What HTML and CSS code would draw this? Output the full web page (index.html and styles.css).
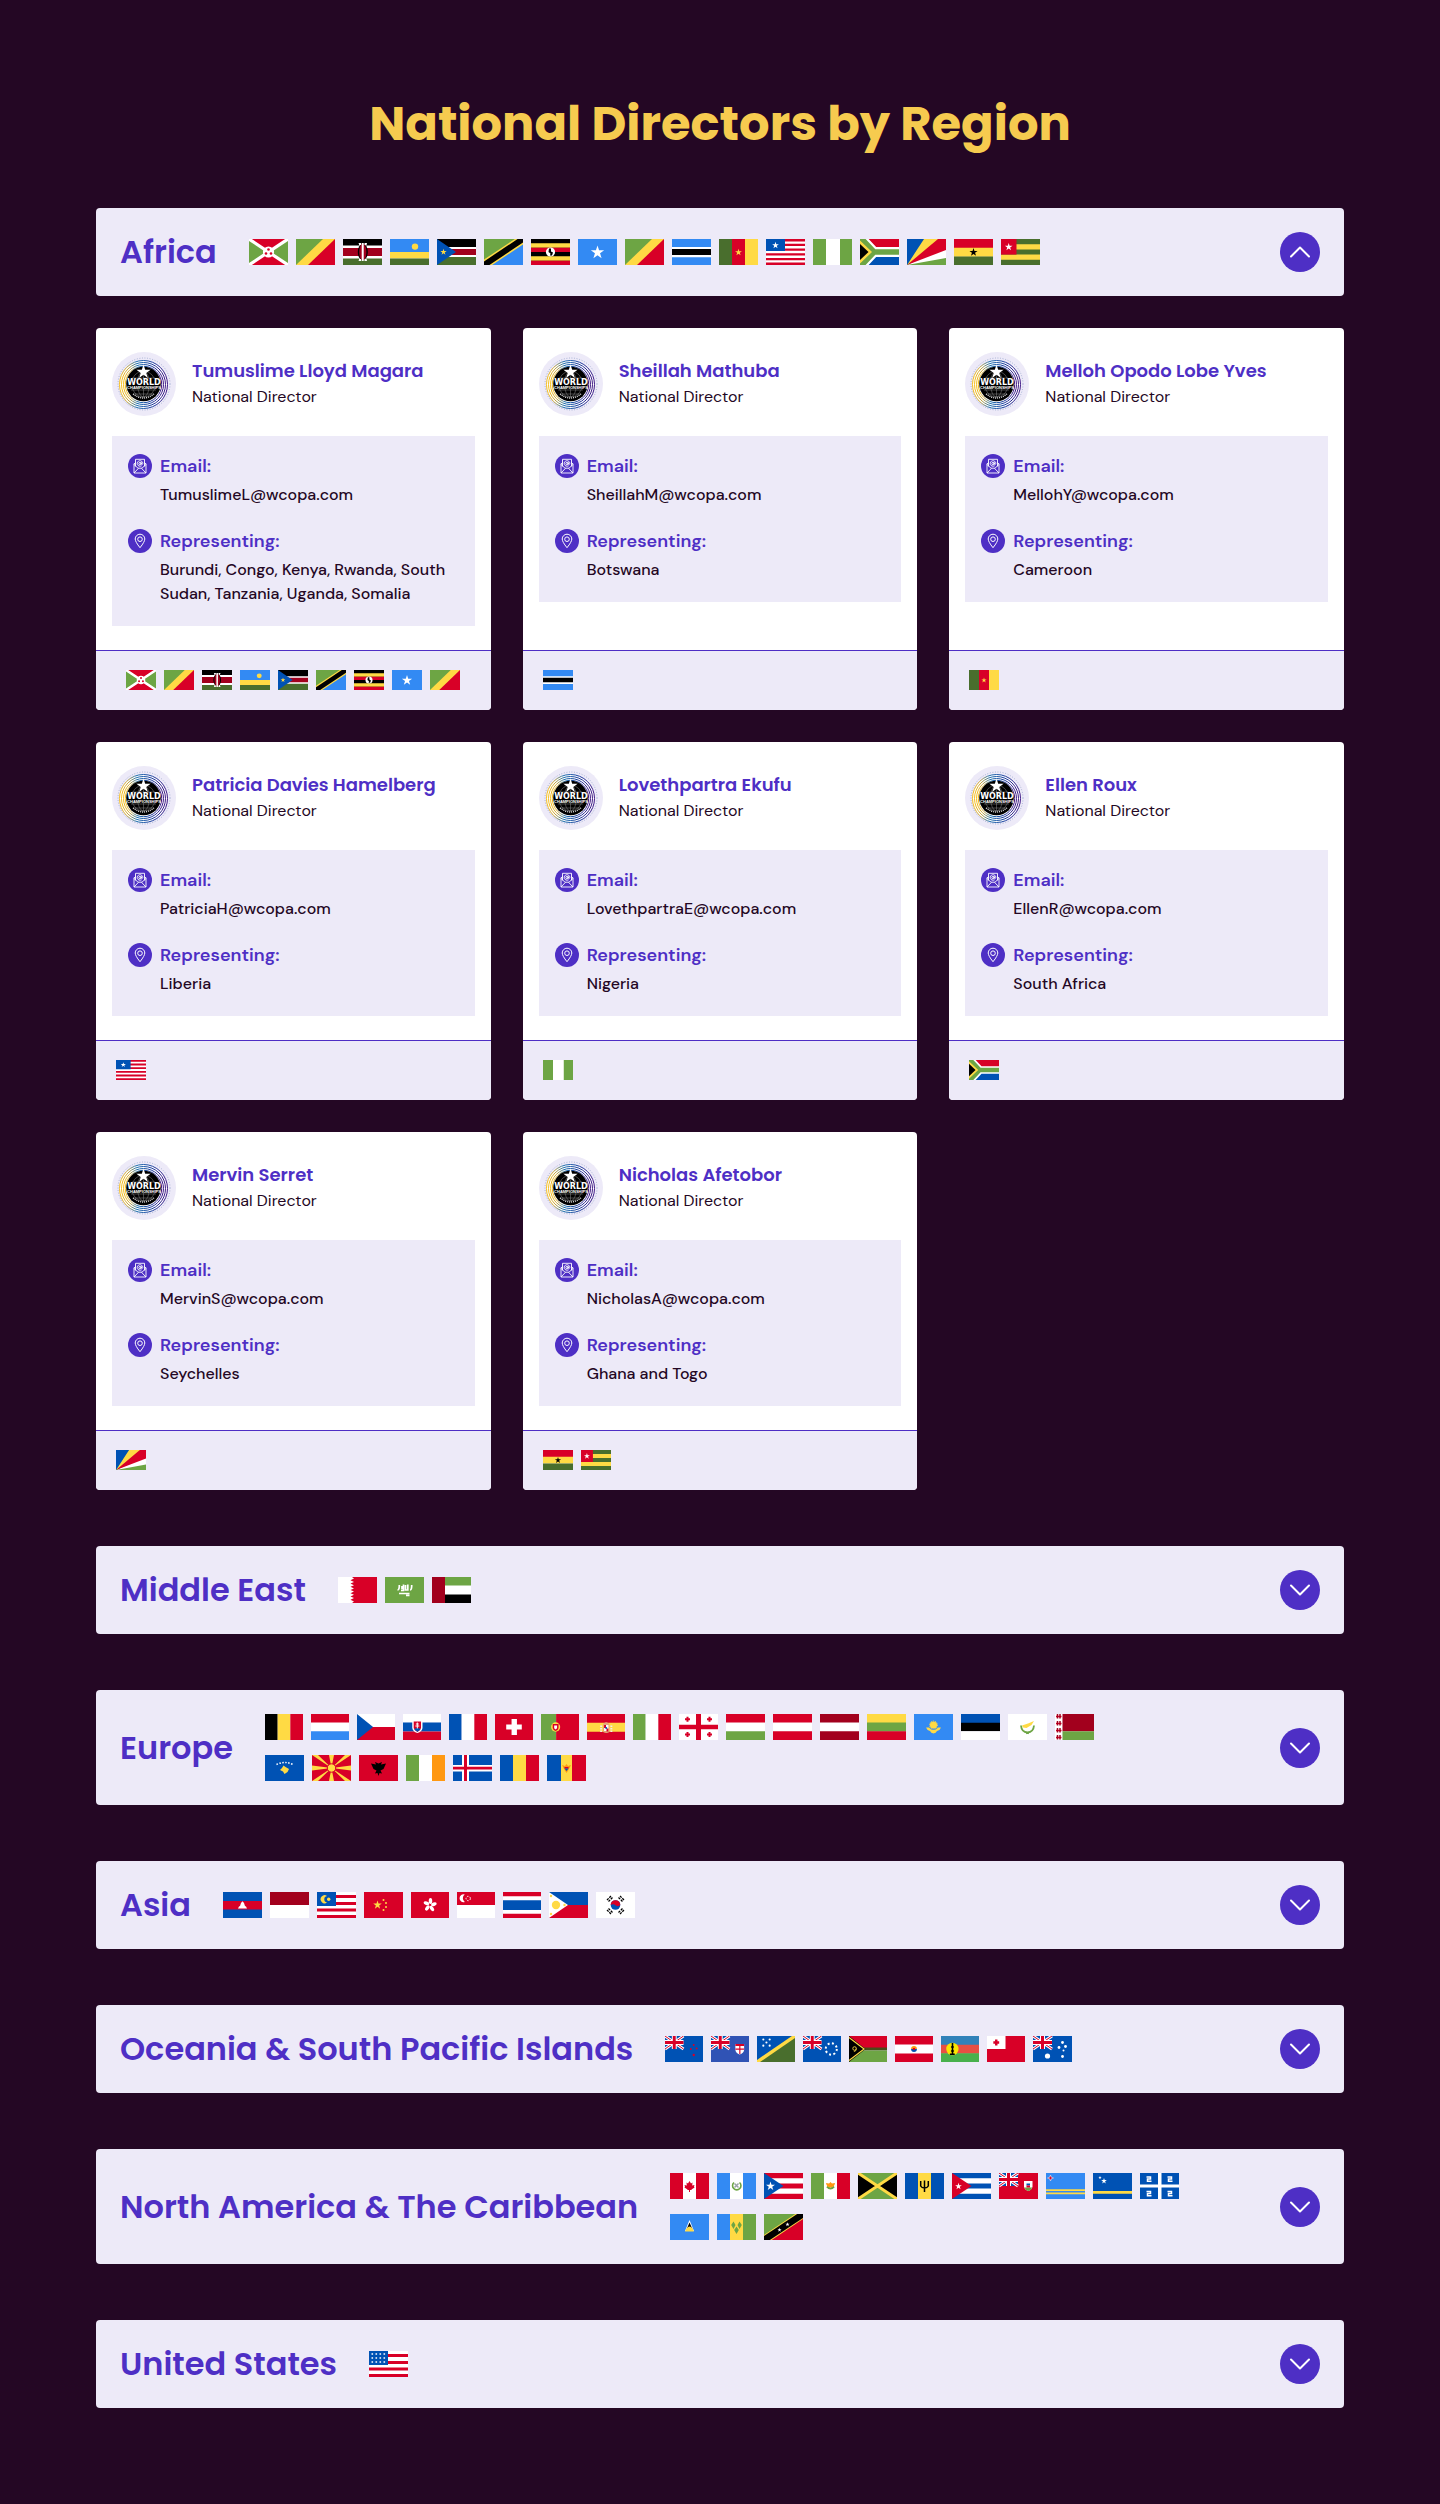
FILE: index.html
```
<!DOCTYPE html>
<html lang="en">
<head>
<meta charset="utf-8">
<meta name="viewport" content="width=device-width, initial-scale=1">
<title>National Directors by Region</title>
<link rel="stylesheet" href="styles.css">
</head>
<body>
<svg class="sprite" aria-hidden="true">
  <defs>
    <linearGradient id="ring" x1="0" y1="0" x2="1" y2="0">
      <stop offset="0" stop-color="#f5bd1c"/><stop offset=".15" stop-color="#c9a53a"/><stop offset=".35" stop-color="#1d6fae"/><stop offset=".7" stop-color="#1a3a9c"/><stop offset="1" stop-color="#3c1583"/>
    </linearGradient>
    <polygon id="star" points="0,-1 .225,-.309 .951,-.309 .363,.118 .588,.809 0,.382 -.588,.809 -.363,.118 -.951,-.309 -.225,-.309"/>
    <g id="jack">
      <path class="b" d="M0 0h19v13H0z"/>
      <path d="M0 0l19 13M19 0L0 13" stroke="#fff" stroke-width="3"/>
      <path d="M0 0l19 13M19 0L0 13" stroke="#d80027" stroke-width="1"/>
      <path class="w" d="M7 0h5v13H7zM0 4h19v5H0z"/>
      <path class="r" d="M8 0h3v13H8zM0 5h19v3H0z"/>
    </g>
  </defs>

  <symbol id="logo" viewBox="0 0 64 64">
    <circle cx="32" cy="32" r="26" fill="none" stroke="#7d8fc0" stroke-width="1" stroke-dasharray="1 1.600" opacity=".6"/>
    <circle cx="31.500" cy="32.500" r="24" fill="#fff"/>
    <g fill="none" stroke="url(#ring)" stroke-width="1">
      <circle cx="31.500" cy="32.500" r="24"/><circle cx="31.500" cy="32.500" r="22"/><circle cx="31.500" cy="32.500" r="20"/><circle cx="31.500" cy="32.500" r="18.200"/>
    </g>
    <circle cx="31.500" cy="32" r="17.300" fill="#000"/>
    <g fill="none" stroke="#8b8b8b" stroke-width=".5">
      <ellipse cx="31.500" cy="32" rx="6" ry="13"/><ellipse cx="31.500" cy="32" rx="12" ry="13"/><path d="M20 26h23M19 38h25M21 42h21M31.500 20v25"/>
    </g>
    <path d="M21 42q10.500 8 21 0" fill="none" stroke="#ddd" stroke-width="1.400" stroke-dasharray="1 1"/>
    <path d="M15.500 27h32v10h-32z" fill="#000"/>
    <use href="#star" transform="translate(31.500 20) scale(7.500)" fill="#fff"/>
  </symbol>
  <symbol id="mail" viewBox="0 0 24 24">
    <circle cx="12" cy="12" r="12" fill="#4e2fc5"/>
    <g fill="none" stroke="#fff" stroke-width=".9" stroke-linejoin="round" stroke-linecap="round">
      <path d="M7.500 12V5.300h9V12M7.500 8.500L6 10v9h12v-9l-1.500-1.500M6 10.500l4 3.700h4l4-3.700M6.300 18.700l3.800-4M17.700 18.700l-3.800-4"/>
      <circle cx="12" cy="9.600" r="1.200"/><path d="M13.200 8.500v1.600q1.600.8 1.600-.7A2.800 2.800 0 1 0 13.300 12"/>
    </g>
  </symbol>
  <symbol id="pin" viewBox="0 0 24 24">
    <circle cx="12" cy="12" r="12" fill="#4e2fc5"/>
    <g fill="none" stroke="#fff" stroke-width="1"><path d="M12 18.700Q7.200 12.700 7.200 10a4.800 4.800 0 0 1 9.600 0Q16.800 12.700 12 18.700z"/><circle cx="12" cy="10.200" r="2.300"/></g>
  </symbol>

  <symbol id="bi" viewBox="0 0 39 26" preserveAspectRatio="none"><path class="r" d="M0 0h39v26H0z"/><path class="g" d="M0 0l19.500 13L0 26zM39 0L19.500 13 39 26z"/><path d="M0 0l39 26M39 0L0 26" stroke="#fff" stroke-width="3.200"/><circle class="w" cx="19.500" cy="13" r="5.600"/><g class="r"><circle cx="19.500" cy="10.500" r="1.300"/><circle cx="17" cy="14.500" r="1.300"/><circle cx="22" cy="14.500" r="1.300"/></g></symbol>
  <symbol id="cg" viewBox="0 0 39 26" preserveAspectRatio="none"><path class="y" d="M0 0h39v26H0z"/><path class="g" d="M0 0h27L0 26z"/><path class="r" d="M39 0v26H12z"/></symbol>
  <symbol id="ke" viewBox="0 0 39 26" preserveAspectRatio="none"><path class="w" d="M0 0h39v26H0z"/><path class="k" d="M0 0h39v6.500H0z"/><path class="m" d="M0 9h39v8H0z"/><path class="d" d="M0 19.500h39V26H0z"/><path d="M16 4l7.500 18M23.500 4L16 22" stroke="#fff" stroke-width="1"/><ellipse class="k" cx="19.800" cy="13" rx="5" ry="8"/><ellipse class="m" cx="19.800" cy="13" rx="3.600" ry="8.500"/><path class="w" d="M18.700 4h2v18h-2zM16 4h2v2h-2zM21.500 4h2v2h-2zM16 20h2v2h-2zM21.500 20h2v2h-2z"/></symbol>
  <symbol id="rw" viewBox="0 0 39 26" preserveAspectRatio="none"><path class="s" d="M0 0h39v13H0z"/><path class="y" d="M0 13h39v6.500H0z"/><path class="d" d="M0 19.500h39V26H0z"/><circle class="y" cx="25" cy="7.600" r="3.200"/></symbol>
  <symbol id="ss" viewBox="0 0 39 26" preserveAspectRatio="none"><path class="w" d="M0 0h39v26H0z"/><path class="k" d="M0 0h39v8H0z"/><path class="m" d="M0 10h39v6H0z"/><path class="d" d="M0 18h39v8H0z"/><path class="b" d="M0 0l19 13L0 26z"/><use href="#star" class="y" transform="translate(6.500 13) scale(3.300)"/></symbol>
  <symbol id="tz" viewBox="0 0 39 26" preserveAspectRatio="none"><path class="g" d="M0 0h39v26H0z"/><path class="s" d="M39 0v26H0z"/><path d="M-3 28L42-2" stroke="#ffda44" stroke-width="9"/><path d="M-3 28L42-2" stroke="#000" stroke-width="6"/></symbol>
  <symbol id="ug" viewBox="0 0 39 26" preserveAspectRatio="none"><path class="k" d="M0 0h39v26H0z"/><path class="y" d="M0 4.300h39v4.400H0zM0 17.300h39v4.400H0z"/><path class="r" d="M0 8.700h39V13H0zM0 21.700h39V26H0z"/><circle class="w" cx="19.500" cy="13" r="4.600"/><path class="k" d="M18 9.500h2v3l2 1-1 3h-2l.500-2-2-1.500z"/></symbol>
  <symbol id="so" viewBox="0 0 39 26" preserveAspectRatio="none"><path class="s" d="M0 0h39v26H0z"/><use href="#star" class="w" transform="translate(19.500 13.500) scale(7)"/></symbol>
  <symbol id="bw" viewBox="0 0 39 26" preserveAspectRatio="none"><path class="s" d="M0 0h39v26H0z"/><path class="w" d="M0 8h39v10.200H0z"/><path class="k" d="M0 10h39v6H0z"/></symbol>
  <symbol id="cm" viewBox="0 0 39 26" preserveAspectRatio="none"><path class="d" d="M0 0h13v26H0z"/><path class="r" d="M13 0h13v26H13z"/><path class="y" d="M26 0h13v26H26z"/><use href="#star" class="y" transform="translate(19.500 13.300) scale(3.600)"/></symbol>
  <symbol id="lr" viewBox="0 0 39 26" preserveAspectRatio="none"><path class="w" d="M0 0h39v26H0z"/><path d="M0 1.200h39M0 5.900h39M0 10.600h39M0 15.400h39M0 20.100h39M0 24.800h39" stroke="#d80027" stroke-width="2.400"/><path class="b" d="M0 0h19v12H0z"/><use href="#star" class="w" transform="translate(9.500 6.300) scale(3.500)"/></symbol>
  <symbol id="ng" viewBox="0 0 39 26" preserveAspectRatio="none"><path class="w" d="M0 0h39v26H0z"/><path class="g" d="M0 0h13v26H0zM27 0h12v26H27z"/></symbol>
  <symbol id="za" viewBox="0 0 39 26" preserveAspectRatio="none"><path class="r" d="M0 0h39v13H0z"/><path class="b" d="M0 13h39v13H0z"/><path d="M-2-4l16 17-16 17M14 13h27" fill="none" stroke="#fff" stroke-width="10"/><path d="M-2-4l16 17-16 17M14 13h27" fill="none" stroke="#6da544" stroke-width="5.600"/><path class="y" d="M0 1.500L12 13 0 24.500z"/><path class="k" d="M0 5l8.500 8L0 21z"/></symbol>
  <symbol id="sc" viewBox="0 0 39 26" preserveAspectRatio="none"><path class="g" d="M0 0h39v26H0z"/><path class="w" d="M0 26L39 8v11z"/><path class="r" d="M0 26L29 0h10v11z"/><path class="y" d="M0 26L16 0h15z"/><path class="b" d="M0 0h17L0 26z"/></symbol>
  <symbol id="gh" viewBox="0 0 39 26" preserveAspectRatio="none"><path class="r" d="M0 0h39v9H0z"/><path class="y" d="M0 8.700h39v9H0z"/><path class="d" d="M0 17.500h39V26H0z"/><use href="#star" class="k" transform="translate(19.500 13.300) scale(4.300)"/></symbol>
  <symbol id="tg" viewBox="0 0 39 26" preserveAspectRatio="none"><path class="d" d="M0 0h39v26H0z"/><path class="y" d="M0 5.200h39v5.200H0zM0 15.600h39v5.200H0z"/><path class="r" d="M0 0h15.500v15.600H0z"/><use href="#star" class="w" transform="translate(7.700 8) scale(4)"/></symbol>

  <symbol id="bh" viewBox="0 0 39 26" preserveAspectRatio="none"><path class="w" d="M0 0h39v26H0z"/><path class="r" d="M39 0H14l2 1.600-3.500 1.600L16 5l-3.500 1.600L16 8.200l-3.500 1.600 3.500 1.600L12.500 13l3.500 1.600-3.500 1.600 3.500 1.600-3.500 1.600L16 21l-3.500 1.800 3.500 1.600L14 26h25z"/></symbol>
  <symbol id="sa" viewBox="0 0 39 26" preserveAspectRatio="none"><path class="g" d="M0 0h39v26H0z"/><path d="M12.500 13q2 0 1.800-5M16 13.300h2.500V7.500M17 9v3M20.500 8v5h2.300V7.500M25 13q1.800 0 1.700-5M14 16.500h10.500M21 18.300h3.500" fill="none" stroke="#fff" stroke-width="1.700"/></symbol>
  <symbol id="ae" viewBox="0 0 39 26" preserveAspectRatio="none"><path class="w" d="M0 0h39v26H0z"/><path class="g" d="M0 0h39v8.500H0z"/><path class="k" d="M0 17.500h39V26H0z"/><path class="m" d="M0 0h13v26H0z"/></symbol>

  <symbol id="be" viewBox="0 0 39 26" preserveAspectRatio="none"><path class="k" d="M0 0h13v26H0z"/><path class="y" d="M13 0h13v26H13z"/><path class="r" d="M26 0h13v26H26z"/></symbol>
  <symbol id="lu" viewBox="0 0 39 26" preserveAspectRatio="none"><path class="w" d="M0 0h39v26H0z"/><path class="r" d="M0 0h39v8.500H0z"/><path class="s" d="M0 17.300h39V26H0z"/></symbol>
  <symbol id="cz" viewBox="0 0 39 26" preserveAspectRatio="none"><path class="w" d="M0 0h39v13H0z"/><path class="r" d="M0 13h39v13H0z"/><path class="b" d="M0 0l16.500 13L0 26z"/></symbol>
  <symbol id="sk" viewBox="0 0 39 26" preserveAspectRatio="none"><path class="w" d="M0 0h39v8.500H0z"/><path class="b" d="M0 8.500h39v9H0z"/><path class="r" d="M0 17.500h39V26H0z"/><path class="w" d="M9.500 6.500H20V14q-.500 3.500-5.200 5Q10 17.500 9.500 14z"/><path class="r" d="M11 7.500h7.500V14q-.500 2.500-3.700 4-3.200-1.500-3.800-4z"/><path class="b" d="M11.500 15q3.300-2 6.500 0-1 1.800-3.200 2.800-2.300-1-3.300-2.800z"/><path d="M14.700 8.500v6M12.700 12h4M13.200 10h3" stroke="#fff"/></symbol>
  <symbol id="fr" viewBox="0 0 39 26" preserveAspectRatio="none"><path class="b" d="M0 0h13v26H0z"/><path class="w" d="M13 0h13v26H13z"/><path class="r" d="M26 0h13v26H26z"/></symbol>
  <symbol id="ch" viewBox="0 0 39 26" preserveAspectRatio="none"><path class="r" d="M0 0h39v26H0z"/><path class="w" d="M17 5h5.500v5.500h5v5h-5V21H17v-5.500h-5.500v-5H17z"/></symbol>
  <symbol id="pt" viewBox="0 0 39 26" preserveAspectRatio="none"><path class="g" d="M0 0h15.500v26H0z"/><path class="r" d="M15.500 0H39v26H15.500z"/><circle class="y" cx="15" cy="13" r="4.700"/><path class="r" d="M12 10h6v4q-.500 2.500-3 3-2.500-.500-3-3z"/><path class="w" d="M13.500 11.500h3v2.700L15 15.500l-1.500-1.300z"/></symbol>
  <symbol id="es" viewBox="0 0 39 26" preserveAspectRatio="none"><path class="r" d="M0 0h39v26H0z"/><path class="y" d="M0 8.700h39v9H0z"/><path d="M14.500 11.500v7M25 11.500v7" stroke="#eee" stroke-width="2" stroke-dasharray="1.500 1"/><path fill="#e3a878" d="M16.500 10q3-3.500 6.500 0v8q-3 2-6.500 0z"/><path class="w" d="M17.500 11h4.500v6h-4.500z"/><path class="r" d="M17.500 11h2v3h-2zM20 14.500h2v3h-2z"/><circle class="b" cx="19.700" cy="14" r="1"/></symbol>
  <symbol id="it" viewBox="0 0 39 26" preserveAspectRatio="none"><path class="g" d="M0 0h13v26H0z"/><path class="w" d="M13 0h13v26H13z"/><path class="r" d="M26 0h13v26H26z"/></symbol>
  <symbol id="ge" viewBox="0 0 39 26" preserveAspectRatio="none"><path class="w" d="M0 0h39v26H0z"/><path class="r" d="M17 0h5v26h-5zM0 10.700h39v4.600H0z"/><path d="M6 5.300h5M8.500 2.800v5M28 5.300h5M30.500 2.800v5M6 20.500h5M8.500 18v5M28 20.500h5M30.500 18v5" stroke="#d80027" stroke-width="2"/></symbol>
  <symbol id="hu" viewBox="0 0 39 26" preserveAspectRatio="none"><path class="w" d="M0 0h39v26H0z"/><path class="r" d="M0 0h39v8.500H0z"/><path class="g" d="M0 17.300h39V26H0z"/></symbol>
  <symbol id="at" viewBox="0 0 39 26" preserveAspectRatio="none"><path class="w" d="M0 0h39v26H0z"/><path class="r" d="M0 0h39v8.500H0zM0 17.300h39V26H0z"/></symbol>
  <symbol id="lv" viewBox="0 0 39 26" preserveAspectRatio="none"><path class="w" d="M0 0h39v26H0z"/><path class="m" d="M0 0h39v8.500H0zM0 17.300h39V26H0z"/></symbol>
  <symbol id="lt" viewBox="0 0 39 26" preserveAspectRatio="none"><path class="y" d="M0 0h39v9H0z"/><path class="g" d="M0 8.600h39v9H0z"/><path class="r" d="M0 17.300h39V26H0z"/></symbol>
  <symbol id="kz" viewBox="0 0 39 26" preserveAspectRatio="none"><path class="s" d="M0 0h39v26H0z"/><circle class="y" cx="19.500" cy="11" r="3.600"/><circle cx="19.500" cy="11" r="4" fill="none" stroke="#ffda44" stroke-dasharray="1 1"/><path class="y" d="M12 13.500h3q4.500 5 9 0h3q-1 3-4 3.500-1 2-3.500 2.500-2.500-.500-3.500-2.500-3-.500-4-3.500z"/></symbol>
  <symbol id="ee" viewBox="0 0 39 26" preserveAspectRatio="none"><path class="b" d="M0 0h39v9H0z"/><path class="k" d="M0 8.700h39v8.600H0z"/><path class="w" d="M0 17.300h39V26H0z"/></symbol>
  <symbol id="cy" viewBox="0 0 39 26" preserveAspectRatio="none"><path class="w" d="M0 0h39v26H0z"/><path class="y" d="M14 11.500l6-2 6-2.500-2.500 4-5 3-3.500-.500z"/><path d="M13 11.500q.500 6.500 6.500 7 6-.500 6.500-7M18 19.500l1.500-1 1.500 1" fill="none" stroke="#6da544" stroke-width="1.800"/></symbol>
  <symbol id="by" viewBox="0 0 39 26" preserveAspectRatio="none"><path class="w" d="M0 0h7.500v26H0z"/><path class="m" d="M7.500 0H39v17.300H7.500z"/><path class="g" d="M7.500 17.300H39V26H7.500z"/><path d="M1 2.500h5.500M1 9.500h5.500M1 16.500h5.500M1 23.500h5.500" stroke="#d80027" stroke-width="1.500"/><path d="M2.500 0v26M5 0v26" stroke="#a2001d" stroke-width="1.500" stroke-dasharray="4.500 2.500"/></symbol>
  <symbol id="xk" viewBox="0 0 39 26" preserveAspectRatio="none"><path class="b" d="M0 0h39v26H0z"/><path d="M11.500 9.500q8-4 16.500 0" fill="none" stroke="#fff" stroke-width="1.500" stroke-dasharray="1.500 1.500"/><path class="y" d="M18.500 10.500l2 1.500 3.500 2-1.500 3-3 2-1.500-2.500-3-1.500 2-2z"/></symbol>
  <symbol id="mk" viewBox="0 0 39 26" preserveAspectRatio="none"><path class="r" d="M0 0h39v26H0z"/><path class="y" d="M0 0h6l13.500 13L33 0h6L19.500 13 39 26h-6L19.500 13 6 26H0l19.500-13zM17 0h5l-2.500 13zM17 26h5l-2.500-13zM0 10.500v5L19.500 13zM39 10.500v5L19.500 13z"/><circle cx="19.500" cy="13" r="4.200" class="y" stroke="#d80027"/></symbol>
  <symbol id="al" viewBox="0 0 39 26" preserveAspectRatio="none"><path class="r" d="M0 0h39v26H0z"/><path class="k" d="M16 7l3.500 1.500L23 7l-1 2.500 5-1-2.500 5.500-3 1.500 1.500 3-2.500-.500-1 3-1-3-2.500.500 1.500-3-3-1.500L12 8.500l5 1z"/></symbol>
  <symbol id="ie" viewBox="0 0 39 26" preserveAspectRatio="none"><path class="g" d="M0 0h13v26H0z"/><path class="w" d="M13 0h13v26H13z"/><path class="o" d="M26 0h13v26H26z"/></symbol>
  <symbol id="is" viewBox="0 0 39 26" preserveAspectRatio="none"><path class="b" d="M0 0h39v26H0z"/><path class="w" d="M9 0h7v26H9zM0 10h39v6.500H0z"/><path class="r" d="M11 0h3v26h-3zM0 11.800h39v2.800H0z"/></symbol>
  <symbol id="ro" viewBox="0 0 39 26" preserveAspectRatio="none"><path class="b" d="M0 0h13v26H0z"/><path class="y" d="M13 0h13v26H13z"/><path class="r" d="M26 0h13v26H26z"/></symbol>
  <symbol id="md" viewBox="0 0 39 26" preserveAspectRatio="none"><path class="b" d="M0 0h14v26H0z"/><path class="y" d="M14 0h11v26H14z"/><path class="r" d="M25 0h14v26H25z"/><path class="o" d="M15 10l3 1 1.500-2 1.500 2 3-1-2 4-2.500 4-2.500-4z"/><path class="r" d="M17.500 12h4v1.500h-4z"/><path class="b" d="M17.500 13.500h4L19.500 16z"/></symbol>

  <symbol id="kh" viewBox="0 0 39 26" preserveAspectRatio="none"><path class="b" d="M0 0h39v26H0z"/><path class="r" d="M0 9h39v8.500H0z"/><path class="w" d="M15 16.500l1-2 1-.500 1-3 1.500-1.700 1.500 1.700 1 3 1 .500 1 2z"/></symbol>
  <symbol id="id" viewBox="0 0 39 26" preserveAspectRatio="none"><path class="m" d="M0 0h39v13H0z"/><path class="w" d="M0 13h39v13H0z"/></symbol>
  <symbol id="my" viewBox="0 0 39 26" preserveAspectRatio="none"><path class="w" d="M0 0h39v26H0z"/><path d="M0 4.500h39M0 11.500h39M0 18h39M0 24.500h39" stroke="#d80027" stroke-width="3"/><path class="b" d="M0 0h19v14H0z"/><path class="y" d="M10 4a4 4 0 1 0 0 6.500 3.300 3.300 0 0 1 0-6.500z"/><circle class="y" cx="11.700" cy="7.200" r="1.700"/></symbol>
  <symbol id="cn" viewBox="0 0 39 26" preserveAspectRatio="none"><path class="r" d="M0 0h39v26H0z"/><use href="#star" class="y" transform="translate(13.500 13) scale(4.500)"/><g class="y"><circle cx="19.500" cy="8" r="1"/><circle cx="22" cy="11" r="1"/><circle cx="22" cy="15" r="1"/><circle cx="19.500" cy="18" r="1"/></g></symbol>
  <symbol id="hk" viewBox="0 0 39 26" preserveAspectRatio="none"><path class="r" d="M0 0h39v26H0z"/><g class="w" transform="translate(19.500 13)"><ellipse id="petal" cx=".5" cy="-4" rx="1.800" ry="3"/><use href="#petal" transform="rotate(72)"/><use href="#petal" transform="rotate(144)"/><use href="#petal" transform="rotate(216)"/><use href="#petal" transform="rotate(288)"/></g></symbol>
  <symbol id="sg" viewBox="0 0 39 26" preserveAspectRatio="none"><path class="r" d="M0 0h39v13H0z"/><path class="w" d="M0 13h39v13H0zM8 2.500a4 4 0 1 0 0 7.500 4.500 4.500 0 0 1 0-7.500z"/><circle cx="11.500" cy="6.500" r="2.200" fill="none" stroke="#fff" stroke-dasharray="1.500 1.200"/></symbol>
  <symbol id="th" viewBox="0 0 39 26" preserveAspectRatio="none"><path class="w" d="M0 0h39v26H0z"/><path class="r" d="M0 0h39v4.300H0zM0 21.700h39V26H0z"/><path class="b" d="M0 8.300h39V18H0z"/></symbol>
  <symbol id="ph" viewBox="0 0 39 26" preserveAspectRatio="none"><path class="b" d="M0 0h39v13H0z"/><path class="r" d="M0 13h39v13H0z"/><path class="w" d="M0 0l19 13L0 26z"/><g class="y"><circle cx="7" cy="13" r="4.200"/><circle cx="2" cy="4" r="1.200"/><circle cx="2" cy="22" r="1.200"/><circle cx="15.500" cy="13" r="1.200"/></g></symbol>
  <symbol id="kr" viewBox="0 0 39 26" preserveAspectRatio="none"><path class="w" d="M0 0h39v26H0z"/><circle class="b" cx="19.500" cy="13" r="4.800"/><path class="r" d="M14.700 13a4.800 4.800 0 0 1 9.600 0q-2 2-4.500.500-2.500-2-5.100-.500z"/><path d="M11 8l4-4M12.500 9.500l4-4M24 4l4 4M22.500 5.500l4 4M11 18l4 4M12.500 16.500l4 4M24 22l4-4M22.500 20.500l4-4" stroke="#000" stroke-width="1.300" stroke-dasharray="2.300 1"/></symbol>

  <symbol id="nz" viewBox="0 0 39 26" preserveAspectRatio="none"><path class="b" d="M0 0h39v26H0z"/><use href="#jack"/><g class="r"><circle cx="29.500" cy="9" r="1"/><circle cx="26.500" cy="13" r="1"/><circle cx="32.500" cy="12.500" r="1"/><circle cx="29.500" cy="19" r="1.200"/></g></symbol>
  <symbol id="fj" viewBox="0 0 39 26" preserveAspectRatio="none"><path fill="#3053b5" d="M0 0h39v26H0z"/><use href="#jack"/><path class="w" d="M25 8h9v6q-.500 3-4.500 4.500Q25.500 17 25 14z"/><path class="r" d="M25 8h9v2h-9zM29 9h1.200v9H29zM25 12.500h9v1.200h-9z"/></symbol>
  <symbol id="sb" viewBox="0 0 39 26" preserveAspectRatio="none"><path class="b" d="M0 0h39v26H0z"/><path class="d" d="M39 0v26H0z"/><path d="M-3 28L42-2" stroke="#ffda44" stroke-width="3.500"/><g class="w"><circle cx="6.500" cy="3.500" r="1.100"/><circle cx="13" cy="3.500" r="1.100"/><circle cx="9.700" cy="6.500" r="1.100"/><circle cx="6.500" cy="9.700" r="1.100"/><circle cx="13" cy="9.700" r="1.100"/></g></symbol>
  <symbol id="ck" viewBox="0 0 39 26" preserveAspectRatio="none"><path class="b" d="M0 0h39v26H0z"/><use href="#jack"/><circle cx="29" cy="13" r="5.700" fill="none" stroke="#fff" stroke-width="2" stroke-dasharray="2 2.480"/></symbol>
  <symbol id="vu" viewBox="0 0 39 26" preserveAspectRatio="none"><path class="r" d="M0 0h39v12H0z"/><path fill="#4a4a18" d="M0 11.500h39v3H0z"/><path class="g" d="M0 14.500h39V26H0z"/><path class="k" d="M0 0l17 13L0 26z"/><path d="M0 1.500L15.500 13 0 24.500" fill="none" stroke="#ffda44" stroke-width="1.200"/><circle cx="5.700" cy="12.500" r="1.800" fill="none" stroke="#e5c440"/><path d="M7.500 12.500q0 3-2.500 3" fill="none" stroke="#e5c440"/></symbol>
  <symbol id="pf" viewBox="0 0 39 26" preserveAspectRatio="none"><path class="w" d="M0 0h39v26H0z"/><path class="r" d="M0 0h39v8.500H0zM0 17.500h39V26H0z"/><path class="o" d="M16.500 13a3 3 0 0 1 6 0z"/><path class="b" d="M16.500 13a3 3 0 0 0 6 0z"/><path class="r" d="M18.500 12h2v2h-2z"/></symbol>
  <symbol id="nc" viewBox="0 0 39 26" preserveAspectRatio="none"><path fill="#3182b9" d="M0 0h39v9H0z"/><path fill="#e74f43" d="M0 8.700h39v9H0z"/><path fill="#48b04c" d="M0 17.300h39V26H0z"/><circle cx="11.700" cy="13" r="6.300" fill="#fae600"/><path class="k" d="M11 7h1.600v3l.8 1-.8 1v2l1 1-1 1v1.500h1.500v1.500h-5v-1.500H11V16l-1-1 1-1v-2l-1-1 1-1z"/></symbol>
  <symbol id="to" viewBox="0 0 39 26" preserveAspectRatio="none"><path class="r" d="M0 0h39v26H0z"/><path class="w" d="M0 0h19v13H0z"/><path d="M6.500 6.500h6M9.500 3.500v6" stroke="#d80027" stroke-width="2.500"/></symbol>
  <symbol id="au" viewBox="0 0 39 26" preserveAspectRatio="none"><path class="b" d="M0 0h39v26H0z"/><use href="#jack"/><g class="w"><circle cx="14.500" cy="20" r="2.600"/><circle cx="29.500" cy="6.500" r="1.400"/><circle cx="26" cy="11.500" r="1.400"/><circle cx="32.500" cy="10.500" r="1.400"/><circle cx="30.500" cy="14.500" r="1"/><circle cx="29.500" cy="20.500" r="1.400"/></g></symbol>

  <symbol id="ca" viewBox="0 0 39 26" preserveAspectRatio="none"><path class="w" d="M0 0h39v26H0z"/><path class="r" d="M0 0h13v26H0zM26 0h13v26H26zM19.500 8l1.500 2.500 1.500-1-.300 3 2.300-.500-.500 1.500.500 1-3 2v.500H20V19h-1v-2h-1.500v-.500l-3-2 .500-1-.500-1.500 2.300.500-.300-3 1.500 1z"/></symbol>
  <symbol id="gt" viewBox="0 0 39 26" preserveAspectRatio="none"><path class="w" d="M0 0h39v26H0z"/><path class="s" d="M0 0h13v26H0zM26 0h13v26H26z"/><path d="M17 9.500a4.200 4.200 0 1 0 5.500 0" fill="none" stroke="#6da544" stroke-width="1.600"/><path d="M17.500 10.500l4 4M21.500 10.500l-4 4" stroke="#9aa3a8" stroke-width="1.500"/></symbol>
  <symbol id="pr" viewBox="0 0 39 26" preserveAspectRatio="none"><path class="r" d="M0 0h39v26H0z"/><path class="w" d="M0 5.200h39v5.200H0zM0 15.600h39v5.200H0z"/><path class="b" d="M0 0l19.500 13L0 26z"/><use href="#star" class="w" transform="translate(6.500 13.300) scale(4.700)"/></symbol>
  <symbol id="mx" viewBox="0 0 39 26" preserveAspectRatio="none"><path class="g" d="M0 0h13v26H0z"/><path class="w" d="M13 0h13v26H13z"/><path class="r" d="M26 0h13v26H26z"/><path d="M16 13.500q3.500 4 7 0" fill="none" stroke="#6da544" stroke-width="2"/><path class="o" d="M15 10l3 .500 1.500-1.500 1.500 1.500 3-.500q-.500 4-4.500 4.500Q15.500 14 15 10z"/></symbol>
  <symbol id="jm" viewBox="0 0 39 26" preserveAspectRatio="none"><path class="g" d="M0 0h39v26H0z"/><path class="k" d="M0 0l19.500 13L0 26zM39 0L19.500 13 39 26z"/><path d="M0 0l39 26M39 0L0 26" stroke="#ffda44" stroke-width="3"/></symbol>
  <symbol id="bb" viewBox="0 0 39 26" preserveAspectRatio="none"><path class="b" d="M0 0h39v26H0z"/><path class="y" d="M13 0h13v26H13z"/><path d="M15.700 8v5q1 2 3.800 2 2.800 0 3.800-2V8M19.500 7.500V19" fill="none" stroke="#000" stroke-width="1.500"/></symbol>
  <symbol id="cu" viewBox="0 0 39 26" preserveAspectRatio="none"><path class="b" d="M0 0h39v26H0z"/><path class="w" d="M0 5.200h39v5.200H0zM0 15.600h39v5.200H0z"/><path class="r" d="M0 0l19.500 13L0 26z"/><use href="#star" class="w" transform="translate(6.500 13.300) scale(3.500)"/></symbol>
  <symbol id="bm" viewBox="0 0 39 26" preserveAspectRatio="none"><path class="r" d="M0 0h39v26H0z"/><use href="#jack"/><path class="w" d="M25 8h8.500v5.500q-.500 3-4.200 4.500-3.800-1.500-4.300-4.500z"/><path class="g" d="M25.300 14.500h8q-1 2.500-4 3.500-3-1-4-3.500z"/><path class="b" d="M27.500 10.500h3.500v2h-3.500z"/><path class="r" d="M27.500 12.500h3.500v2h-3.500z"/></symbol>
  <symbol id="aw" viewBox="0 0 39 26" preserveAspectRatio="none"><path class="s" d="M0 0h39v26H0z"/><path class="y" d="M0 16.300h39v1.700H0zM0 19.500h39v1.700H0z"/><path class="r" stroke="#fff" stroke-width=".5" d="M4.500 2l.8 2.200 2.200.8-2.200.8-.8 2.200-.8-2.200L1.500 5l2.200-.8z"/></symbol>
  <symbol id="cw" viewBox="0 0 39 26" preserveAspectRatio="none"><path class="b" d="M0 0h39v26H0z"/><path class="y" d="M0 18h39v2.700H0z"/><use href="#star" class="w" transform="translate(11 8) scale(3)"/><use href="#star" class="w" transform="translate(7 4.500) scale(1.700)"/></symbol>
  <symbol id="mq" viewBox="0 0 39 26" preserveAspectRatio="none"><path class="b" d="M0 0h39v26H0z"/><path class="w" d="M18 0h3.500v26H18zM0 11.500h39v3H0z"/><g fill="none" stroke="#fff" stroke-width="1.500"><path id="snake" d="M6.500 4h4v2H7.500v2.200h4"/><use href="#snake" x="21"/><use href="#snake" y="14.500"/><use href="#snake" x="21" y="14.500"/></g></symbol>
  <symbol id="lc" viewBox="0 0 39 26" preserveAspectRatio="none"><path class="s" d="M0 0h39v26H0z"/><path class="w" d="M19.500 6l4.500 11h-9z"/><path class="k" d="M19.500 8.500l3.500 8h-7z"/><path class="y" d="M15 17.500q1.500-4.500 4.500-5 3 .500 4.500 5z"/></symbol>
  <symbol id="vc" viewBox="0 0 39 26" preserveAspectRatio="none"><path class="s" d="M0 0h13v26H0z"/><path class="y" d="M13 0h13v26H13z"/><path class="g" d="M26 0h13v26H26zM16.500 7.500l2 3.500-2 4-2.300-4zM22.500 7.500l2.300 3.500-2.300 4-2-4zM19.500 12.500l2.300 3.500-2.300 4-2.300-4z"/></symbol>
  <symbol id="kn" viewBox="0 0 39 26" preserveAspectRatio="none"><path class="g" d="M0 0h39v26H0z"/><path class="r" d="M39 0v26H0z"/><path d="M-3 28L42-2" stroke="#ffda44" stroke-width="8.500"/><path d="M-3 28L42-2" stroke="#000" stroke-width="6.500"/><use href="#star" class="w" transform="translate(15.500 16) scale(2.200)"/><use href="#star" class="w" transform="translate(23.500 10.500) scale(2.200)"/></symbol>
  <symbol id="us" viewBox="0 0 39 26" preserveAspectRatio="none"><path class="w" d="M0 0h39v26H0z"/><path d="M0 4.500h39M0 11.500h39M0 18h39M0 24.500h39" stroke="#d80027" stroke-width="3"/><path class="b" d="M0 0h19v14H0z"/><path d="M2.500 3h15M2.500 7h15M2.500 11h15" stroke="#fff" stroke-width="1.600" stroke-dasharray="1.600 2.400"/></symbol>
</svg>

<main class="page">
  <h1 class="page__title">National Directors by Region</h1>

  <section class="region">
    <header class="region__bar">
      <h2 class="region__name">Africa</h2>
      <div class="flags">
        <svg class="flag" role="img" aria-label="Burundi"><use href="#bi"/></svg>
        <svg class="flag" role="img" aria-label="Congo"><use href="#cg"/></svg>
        <svg class="flag" role="img" aria-label="Kenya"><use href="#ke"/></svg>
        <svg class="flag" role="img" aria-label="Rwanda"><use href="#rw"/></svg>
        <svg class="flag" role="img" aria-label="South Sudan"><use href="#ss"/></svg>
        <svg class="flag" role="img" aria-label="Tanzania"><use href="#tz"/></svg>
        <svg class="flag" role="img" aria-label="Uganda"><use href="#ug"/></svg>
        <svg class="flag" role="img" aria-label="Somalia"><use href="#so"/></svg>
        <svg class="flag" role="img" aria-label="Congo"><use href="#cg"/></svg>
        <svg class="flag" role="img" aria-label="Botswana"><use href="#bw"/></svg>
        <svg class="flag" role="img" aria-label="Cameroon"><use href="#cm"/></svg>
        <svg class="flag" role="img" aria-label="Liberia"><use href="#lr"/></svg>
        <svg class="flag" role="img" aria-label="Nigeria"><use href="#ng"/></svg>
        <svg class="flag" role="img" aria-label="South Africa"><use href="#za"/></svg>
        <svg class="flag" role="img" aria-label="Seychelles"><use href="#sc"/></svg>
        <svg class="flag" role="img" aria-label="Ghana"><use href="#gh"/></svg>
        <svg class="flag" role="img" aria-label="Togo"><use href="#tg"/></svg>
      </div>
      <button class="toggle" type="button" aria-expanded="true" aria-label="Africa"><svg class="toggle__icon" viewBox="0 0 20 20"><path d="M1 14.500l9-9 9 9"/></svg></button>
    </header>
    <div class="cards">
      <article class="card">
        <div class="card__body">
          <div class="person"><svg class="person__logo" viewBox="0 0 64 64" aria-hidden="true"><use href="#logo"/><text class="logo__word" x="32" y="33">WORLD</text><text class="logo__sub" x="32" y="37">CHAMPIONSHIPS</text></svg><div class="person__text"><h3 class="person__name">Tumuslime Lloyd Magara</h3><p class="person__role">National Director</p></div></div>
          <dl class="facts">
            <div class="fact"><dt class="fact__label"><svg class="fact__icon" aria-hidden="true"><use href="#mail"/></svg>Email:</dt><dd class="fact__value"><a href="mailto:TumuslimeL@wcopa.com">TumuslimeL@wcopa.com</a></dd></div>
            <div class="fact"><dt class="fact__label"><svg class="fact__icon" aria-hidden="true"><use href="#pin"/></svg>Representing:</dt><dd class="fact__value">Burundi, Congo, Kenya, Rwanda, South Sudan, Tanzania, Uganda, Somalia</dd></div>
          </dl>
        </div>
        <footer class="card__flags card__flags--full">
          <svg class="flag flag--small" role="img" aria-label="Burundi"><use href="#bi"/></svg>
          <svg class="flag flag--small" role="img" aria-label="Congo"><use href="#cg"/></svg>
          <svg class="flag flag--small" role="img" aria-label="Kenya"><use href="#ke"/></svg>
          <svg class="flag flag--small" role="img" aria-label="Rwanda"><use href="#rw"/></svg>
          <svg class="flag flag--small" role="img" aria-label="South Sudan"><use href="#ss"/></svg>
          <svg class="flag flag--small" role="img" aria-label="Tanzania"><use href="#tz"/></svg>
          <svg class="flag flag--small" role="img" aria-label="Uganda"><use href="#ug"/></svg>
          <svg class="flag flag--small" role="img" aria-label="Somalia"><use href="#so"/></svg>
          <svg class="flag flag--small" role="img" aria-label="Congo"><use href="#cg"/></svg>
        </footer>
      </article>
      <article class="card">
        <div class="card__body">
          <div class="person"><svg class="person__logo" viewBox="0 0 64 64" aria-hidden="true"><use href="#logo"/><text class="logo__word" x="32" y="33">WORLD</text><text class="logo__sub" x="32" y="37">CHAMPIONSHIPS</text></svg><div class="person__text"><h3 class="person__name">Sheillah Mathuba</h3><p class="person__role">National Director</p></div></div>
          <dl class="facts">
            <div class="fact"><dt class="fact__label"><svg class="fact__icon" aria-hidden="true"><use href="#mail"/></svg>Email:</dt><dd class="fact__value"><a href="mailto:SheillahM@wcopa.com">SheillahM@wcopa.com</a></dd></div>
            <div class="fact"><dt class="fact__label"><svg class="fact__icon" aria-hidden="true"><use href="#pin"/></svg>Representing:</dt><dd class="fact__value">Botswana</dd></div>
          </dl>
        </div>
        <footer class="card__flags"><svg class="flag flag--small" role="img" aria-label="Botswana"><use href="#bw"/></svg></footer>
      </article>
      <article class="card">
        <div class="card__body">
          <div class="person"><svg class="person__logo" viewBox="0 0 64 64" aria-hidden="true"><use href="#logo"/><text class="logo__word" x="32" y="33">WORLD</text><text class="logo__sub" x="32" y="37">CHAMPIONSHIPS</text></svg><div class="person__text"><h3 class="person__name">Melloh Opodo Lobe Yves</h3><p class="person__role">National Director</p></div></div>
          <dl class="facts">
            <div class="fact"><dt class="fact__label"><svg class="fact__icon" aria-hidden="true"><use href="#mail"/></svg>Email:</dt><dd class="fact__value"><a href="mailto:MellohY@wcopa.com">MellohY@wcopa.com</a></dd></div>
            <div class="fact"><dt class="fact__label"><svg class="fact__icon" aria-hidden="true"><use href="#pin"/></svg>Representing:</dt><dd class="fact__value">Cameroon</dd></div>
          </dl>
        </div>
        <footer class="card__flags"><svg class="flag flag--small" role="img" aria-label="Cameroon"><use href="#cm"/></svg></footer>
      </article>
      <article class="card">
        <div class="card__body">
          <div class="person"><svg class="person__logo" viewBox="0 0 64 64" aria-hidden="true"><use href="#logo"/><text class="logo__word" x="32" y="33">WORLD</text><text class="logo__sub" x="32" y="37">CHAMPIONSHIPS</text></svg><div class="person__text"><h3 class="person__name">Patricia Davies Hamelberg</h3><p class="person__role">National Director</p></div></div>
          <dl class="facts">
            <div class="fact"><dt class="fact__label"><svg class="fact__icon" aria-hidden="true"><use href="#mail"/></svg>Email:</dt><dd class="fact__value"><a href="mailto:PatriciaH@wcopa.com">PatriciaH@wcopa.com</a></dd></div>
            <div class="fact"><dt class="fact__label"><svg class="fact__icon" aria-hidden="true"><use href="#pin"/></svg>Representing:</dt><dd class="fact__value">Liberia</dd></div>
          </dl>
        </div>
        <footer class="card__flags"><svg class="flag flag--small" role="img" aria-label="Liberia"><use href="#lr"/></svg></footer>
      </article>
      <article class="card">
        <div class="card__body">
          <div class="person"><svg class="person__logo" viewBox="0 0 64 64" aria-hidden="true"><use href="#logo"/><text class="logo__word" x="32" y="33">WORLD</text><text class="logo__sub" x="32" y="37">CHAMPIONSHIPS</text></svg><div class="person__text"><h3 class="person__name">Lovethpartra Ekufu</h3><p class="person__role">National Director</p></div></div>
          <dl class="facts">
            <div class="fact"><dt class="fact__label"><svg class="fact__icon" aria-hidden="true"><use href="#mail"/></svg>Email:</dt><dd class="fact__value"><a href="mailto:LovethpartraE@wcopa.com">LovethpartraE@wcopa.com</a></dd></div>
            <div class="fact"><dt class="fact__label"><svg class="fact__icon" aria-hidden="true"><use href="#pin"/></svg>Representing:</dt><dd class="fact__value">Nigeria</dd></div>
          </dl>
        </div>
        <footer class="card__flags"><svg class="flag flag--small" role="img" aria-label="Nigeria"><use href="#ng"/></svg></footer>
      </article>
      <article class="card">
        <div class="card__body">
          <div class="person"><svg class="person__logo" viewBox="0 0 64 64" aria-hidden="true"><use href="#logo"/><text class="logo__word" x="32" y="33">WORLD</text><text class="logo__sub" x="32" y="37">CHAMPIONSHIPS</text></svg><div class="person__text"><h3 class="person__name">Ellen Roux</h3><p class="person__role">National Director</p></div></div>
          <dl class="facts">
            <div class="fact"><dt class="fact__label"><svg class="fact__icon" aria-hidden="true"><use href="#mail"/></svg>Email:</dt><dd class="fact__value"><a href="mailto:EllenR@wcopa.com">EllenR@wcopa.com</a></dd></div>
            <div class="fact"><dt class="fact__label"><svg class="fact__icon" aria-hidden="true"><use href="#pin"/></svg>Representing:</dt><dd class="fact__value">South Africa</dd></div>
          </dl>
        </div>
        <footer class="card__flags"><svg class="flag flag--small" role="img" aria-label="South Africa"><use href="#za"/></svg></footer>
      </article>
      <article class="card">
        <div class="card__body">
          <div class="person"><svg class="person__logo" viewBox="0 0 64 64" aria-hidden="true"><use href="#logo"/><text class="logo__word" x="32" y="33">WORLD</text><text class="logo__sub" x="32" y="37">CHAMPIONSHIPS</text></svg><div class="person__text"><h3 class="person__name">Mervin Serret</h3><p class="person__role">National Director</p></div></div>
          <dl class="facts">
            <div class="fact"><dt class="fact__label"><svg class="fact__icon" aria-hidden="true"><use href="#mail"/></svg>Email:</dt><dd class="fact__value"><a href="mailto:MervinS@wcopa.com">MervinS@wcopa.com</a></dd></div>
            <div class="fact"><dt class="fact__label"><svg class="fact__icon" aria-hidden="true"><use href="#pin"/></svg>Representing:</dt><dd class="fact__value">Seychelles</dd></div>
          </dl>
        </div>
        <footer class="card__flags"><svg class="flag flag--small" role="img" aria-label="Seychelles"><use href="#sc"/></svg></footer>
      </article>
      <article class="card">
        <div class="card__body">
          <div class="person"><svg class="person__logo" viewBox="0 0 64 64" aria-hidden="true"><use href="#logo"/><text class="logo__word" x="32" y="33">WORLD</text><text class="logo__sub" x="32" y="37">CHAMPIONSHIPS</text></svg><div class="person__text"><h3 class="person__name">Nicholas Afetobor</h3><p class="person__role">National Director</p></div></div>
          <dl class="facts">
            <div class="fact"><dt class="fact__label"><svg class="fact__icon" aria-hidden="true"><use href="#mail"/></svg>Email:</dt><dd class="fact__value"><a href="mailto:NicholasA@wcopa.com">NicholasA@wcopa.com</a></dd></div>
            <div class="fact"><dt class="fact__label"><svg class="fact__icon" aria-hidden="true"><use href="#pin"/></svg>Representing:</dt><dd class="fact__value">Ghana and Togo</dd></div>
          </dl>
        </div>
        <footer class="card__flags"><svg class="flag flag--small" role="img" aria-label="Ghana"><use href="#gh"/></svg><svg class="flag flag--small" role="img" aria-label="Togo"><use href="#tg"/></svg></footer>
      </article>
    </div>
  </section>

  <section class="region">
    <header class="region__bar">
      <h2 class="region__name">Middle East</h2>
      <div class="flags">
        <svg class="flag" role="img" aria-label="Bahrain"><use href="#bh"/></svg>
        <svg class="flag" role="img" aria-label="Saudi Arabia"><use href="#sa"/></svg>
        <svg class="flag" role="img" aria-label="United Arab Emirates"><use href="#ae"/></svg>
      </div>
      <button class="toggle" type="button" aria-expanded="false" aria-label="Middle East"><svg class="toggle__icon" viewBox="0 0 20 20"><path d="M1 5.500l9 9 9-9"/></svg></button>
    </header>
  </section>

  <section class="region">
    <header class="region__bar">
      <h2 class="region__name">Europe</h2>
      <div class="flags flags--wide">
        <svg class="flag flag--narrow" role="img" aria-label="Belgium"><use href="#be"/></svg>
        <svg class="flag flag--narrow" role="img" aria-label="Luxembourg"><use href="#lu"/></svg>
        <svg class="flag flag--narrow" role="img" aria-label="Czech Republic"><use href="#cz"/></svg>
        <svg class="flag flag--narrow" role="img" aria-label="Slovakia"><use href="#sk"/></svg>
        <svg class="flag flag--narrow" role="img" aria-label="France"><use href="#fr"/></svg>
        <svg class="flag flag--narrow" role="img" aria-label="Switzerland"><use href="#ch"/></svg>
        <svg class="flag flag--narrow" role="img" aria-label="Portugal"><use href="#pt"/></svg>
        <svg class="flag flag--narrow" role="img" aria-label="Spain"><use href="#es"/></svg>
        <svg class="flag flag--narrow" role="img" aria-label="Italy"><use href="#it"/></svg>
        <svg class="flag" role="img" aria-label="Georgia"><use href="#ge"/></svg>
        <svg class="flag" role="img" aria-label="Hungary"><use href="#hu"/></svg>
        <svg class="flag" role="img" aria-label="Austria"><use href="#at"/></svg>
        <svg class="flag" role="img" aria-label="Latvia"><use href="#lv"/></svg>
        <svg class="flag" role="img" aria-label="Lithuania"><use href="#lt"/></svg>
        <svg class="flag" role="img" aria-label="Kazakhstan"><use href="#kz"/></svg>
        <svg class="flag" role="img" aria-label="Estonia"><use href="#ee"/></svg>
        <svg class="flag" role="img" aria-label="Cyprus"><use href="#cy"/></svg>
        <svg class="flag" role="img" aria-label="Belarus"><use href="#by"/></svg>
        <svg class="flag" role="img" aria-label="Kosovo"><use href="#xk"/></svg>
        <svg class="flag" role="img" aria-label="North Macedonia"><use href="#mk"/></svg>
        <svg class="flag" role="img" aria-label="Albania"><use href="#al"/></svg>
        <svg class="flag" role="img" aria-label="Ireland"><use href="#ie"/></svg>
        <svg class="flag" role="img" aria-label="Iceland"><use href="#is"/></svg>
        <svg class="flag" role="img" aria-label="Romania"><use href="#ro"/></svg>
        <svg class="flag" role="img" aria-label="Moldova"><use href="#md"/></svg>
      </div>
      <button class="toggle" type="button" aria-expanded="false" aria-label="Europe"><svg class="toggle__icon" viewBox="0 0 20 20"><path d="M1 5.500l9 9 9-9"/></svg></button>
    </header>
  </section>

  <section class="region">
    <header class="region__bar">
      <h2 class="region__name">Asia</h2>
      <div class="flags">
        <svg class="flag" role="img" aria-label="Cambodia"><use href="#kh"/></svg>
        <svg class="flag" role="img" aria-label="Indonesia"><use href="#id"/></svg>
        <svg class="flag" role="img" aria-label="Malaysia"><use href="#my"/></svg>
        <svg class="flag" role="img" aria-label="China"><use href="#cn"/></svg>
        <svg class="flag flag--narrow" role="img" aria-label="Hong Kong"><use href="#hk"/></svg>
        <svg class="flag flag--narrow" role="img" aria-label="Singapore"><use href="#sg"/></svg>
        <svg class="flag flag--narrow" role="img" aria-label="Thailand"><use href="#th"/></svg>
        <svg class="flag" role="img" aria-label="Philippines"><use href="#ph"/></svg>
        <svg class="flag" role="img" aria-label="South Korea"><use href="#kr"/></svg>
      </div>
      <button class="toggle" type="button" aria-expanded="false" aria-label="Asia"><svg class="toggle__icon" viewBox="0 0 20 20"><path d="M1 5.500l9 9 9-9"/></svg></button>
    </header>
  </section>

  <section class="region">
    <header class="region__bar">
      <h2 class="region__name">Oceania &amp; South Pacific Islands</h2>
      <div class="flags">
        <svg class="flag flag--narrow" role="img" aria-label="New Zealand"><use href="#nz"/></svg>
        <svg class="flag flag--narrow" role="img" aria-label="Fiji"><use href="#fj"/></svg>
        <svg class="flag flag--narrow" role="img" aria-label="Solomon Islands"><use href="#sb"/></svg>
        <svg class="flag flag--narrow" role="img" aria-label="Cook Islands"><use href="#ck"/></svg>
        <svg class="flag flag--narrow" role="img" aria-label="Vanuatu"><use href="#vu"/></svg>
        <svg class="flag flag--narrow" role="img" aria-label="French Polynesia"><use href="#pf"/></svg>
        <svg class="flag flag--narrow" role="img" aria-label="New Caledonia"><use href="#nc"/></svg>
        <svg class="flag flag--narrow" role="img" aria-label="Tonga"><use href="#to"/></svg>
        <svg class="flag" role="img" aria-label="Australia"><use href="#au"/></svg>
      </div>
      <button class="toggle" type="button" aria-expanded="false" aria-label="Oceania and South Pacific Islands"><svg class="toggle__icon" viewBox="0 0 20 20"><path d="M1 5.500l9 9 9-9"/></svg></button>
    </header>
  </section>

  <section class="region">
    <header class="region__bar">
      <h2 class="region__name">North America &amp; The Caribbean</h2>
      <div class="flags flags--medium">
        <svg class="flag" role="img" aria-label="Canada"><use href="#ca"/></svg>
        <svg class="flag" role="img" aria-label="Guatemala"><use href="#gt"/></svg>
        <svg class="flag" role="img" aria-label="Puerto Rico"><use href="#pr"/></svg>
        <svg class="flag" role="img" aria-label="Mexico"><use href="#mx"/></svg>
        <svg class="flag" role="img" aria-label="Jamaica"><use href="#jm"/></svg>
        <svg class="flag" role="img" aria-label="Barbados"><use href="#bb"/></svg>
        <svg class="flag" role="img" aria-label="Cuba"><use href="#cu"/></svg>
        <svg class="flag" role="img" aria-label="Bermuda"><use href="#bm"/></svg>
        <svg class="flag" role="img" aria-label="Aruba"><use href="#aw"/></svg>
        <svg class="flag" role="img" aria-label="Curaçao"><use href="#cw"/></svg>
        <svg class="flag" role="img" aria-label="Martinique"><use href="#mq"/></svg>
        <svg class="flag" role="img" aria-label="Saint Lucia"><use href="#lc"/></svg>
        <svg class="flag" role="img" aria-label="Saint Vincent and the Grenadines"><use href="#vc"/></svg>
        <svg class="flag" role="img" aria-label="Saint Kitts and Nevis"><use href="#kn"/></svg>
      </div>
      <button class="toggle" type="button" aria-expanded="false" aria-label="North America and The Caribbean"><svg class="toggle__icon" viewBox="0 0 20 20"><path d="M1 5.500l9 9 9-9"/></svg></button>
    </header>
  </section>

  <section class="region">
    <header class="region__bar">
      <h2 class="region__name">United States</h2>
      <div class="flags"><svg class="flag" role="img" aria-label="United States"><use href="#us"/></svg></div>
      <button class="toggle" type="button" aria-expanded="false" aria-label="United States"><svg class="toggle__icon" viewBox="0 0 20 20"><path d="M1 5.500l9 9 9-9"/></svg></button>
    </header>
  </section>
</main>
</body>
</html>
```
FILE: styles.css
```
:root {
  --night: #240724;
  --lilac: #edeaf8;
  --violet: #4e2fc5;
  --gold: #f6cb4f;
  --heading: Poppins, Inter, "Noto Sans", sans-serif;
  --body: "DM Sans", Inter, "Noto Sans", sans-serif;
}

*,
*::before,
*::after {
  box-sizing: border-box;
}

body {
  margin: 0;
  background: var(--night);
  color: var(--night);
  font-family: var(--body);
  font-size: 16px;
  line-height: 24px;
}

h1, h2, h3, p, dl, dd {
  margin: 0;
}

a {
  color: inherit;
  text-decoration: none;
}

/* Flag and icon sprite */
.sprite {
  position: absolute;
  width: 0;
  height: 0;
}

.r { fill: #d80027; }
.m { fill: #a2001d; }
.g { fill: #6da544; }
.d { fill: #496e2d; }
.y { fill: #ffda44; }
.o { fill: #ff9811; }
.b { fill: #0052b4; }
.s { fill: #338af3; }
.w { fill: #fff; }
.k { fill: #000; }

.logo__word,
.logo__sub {
  fill: #fff;
  font-weight: 700;
  text-anchor: middle;
}

.logo__word {
  font-family: "DejaVu Sans", sans-serif;
  font-size: 8px;
}

.logo__sub {
  font-family: "Liberation Sans", sans-serif;
  font-size: 4px;
}

/* Page */
.page {
  display: flex;
  flex-direction: column;
  gap: 56px;
  max-width: 1440px;
  margin: 0 auto;
  padding: 96px;
}

.page__title {
  color: var(--gold);
  font-family: var(--heading);
  font-size: 48px;
  font-weight: 700;
  line-height: 56px;
  text-align: center;
}

/* Region */
.region {
  display: flex;
  flex-direction: column;
  gap: 32px;
}

.region__bar {
  display: flex;
  align-items: center;
  gap: 32px;
  padding: 24px;
  border-radius: 4px;
  background: var(--lilac);
}

.region__name {
  color: var(--violet);
  font-family: var(--heading);
  font-size: 32px;
  font-weight: 600;
  line-height: 40px;
}

.flags {
  display: flex;
  flex-wrap: wrap;
  gap: 15px 8px;
}

.flags--wide {
  max-width: 832px;
}

.flags--medium {
  max-width: 512px;
}

.flag {
  display: block;
  flex: none;
  width: 39px;
  height: 26px;
}

.flag--narrow {
  width: 38px;
}

.flag--small {
  width: 30px;
  height: 20px;
}

.toggle {
  display: grid;
  flex: none;
  place-items: center;
  width: 40px;
  height: 40px;
  margin-left: auto;
  padding: 0;
  border: 0;
  border-radius: 50%;
  background: var(--violet);
  cursor: pointer;
}

.toggle__icon {
  width: 20px;
  height: 20px;
  fill: none;
  stroke: #fff;
  stroke-width: 2;
  stroke-linecap: round;
  stroke-linejoin: round;
}

/* Director cards */
.cards {
  display: grid;
  grid-template-columns: repeat(3, minmax(0, 1fr));
  gap: 32px;
}

.card {
  display: flex;
  flex-direction: column;
  overflow: hidden;
  border-radius: 4px;
  background: #fff;
}

.card__body {
  display: flex;
  flex: 1;
  flex-direction: column;
  gap: 20px;
  padding: 24px 16px;
}

.person {
  display: flex;
  align-items: center;
  gap: 16px;
}

.person__logo {
  flex: none;
  width: 64px;
  height: 64px;
  border-radius: 50%;
  background: var(--lilac);
}

.person__text {
  padding-bottom: 2px;
}

.person__name {
  color: var(--violet);
  font-family: var(--heading);
  font-size: 18px;
  font-weight: 600;
  line-height: 28px;
}

.facts {
  display: flex;
  flex-direction: column;
  gap: 20px;
  padding: 16px 16px 20px;
  background: var(--lilac);
}

.fact {
  display: flex;
  flex-direction: column;
  gap: 3px;
}

.fact__label {
  display: flex;
  align-items: center;
  gap: 8px;
  color: var(--violet);
  font-size: 18px;
  font-weight: 600;
  line-height: 28px;
}

.fact__icon {
  flex: none;
  width: 24px;
  height: 24px;
}

.fact__value {
  padding-left: 32px;
  font-weight: 500;
}

.card__flags {
  display: flex;
  gap: 8px;
  padding: 19px 20px 20px;
  border-top: 1px solid var(--violet);
  background: var(--lilac);
}

.card__flags--full {
  justify-content: center;
}
```
